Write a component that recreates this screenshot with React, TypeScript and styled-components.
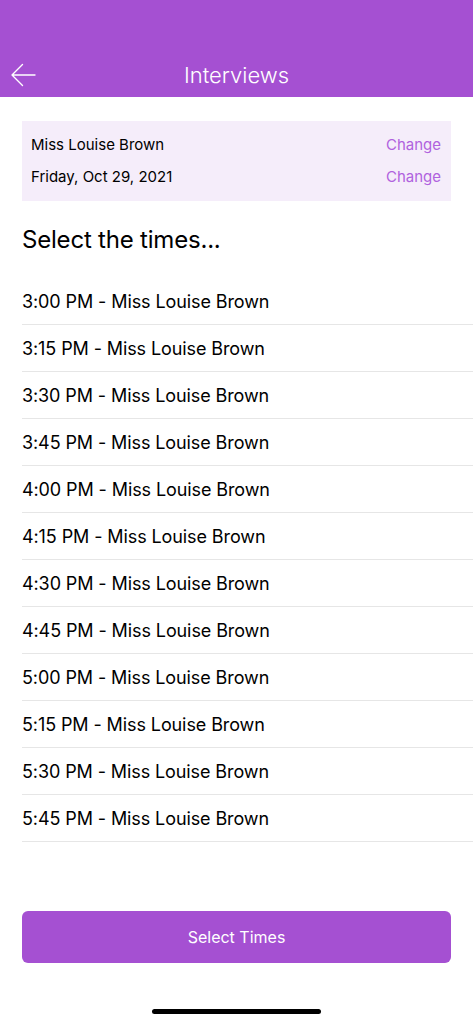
import styled, { createGlobalStyle } from "styled-components";

const GlobalStyle = createGlobalStyle`
  html, body {
    margin: 0;
    padding: 0;
    background: #ffffff;
  }
  body {
    font-family: Inter, "Noto Sans", "Liberation Sans", sans-serif;
    color: #000000;
  }
`;

const PURPLE = "#a550d2";

const Screen = styled.div`
  box-sizing: border-box;
  width: 100%;
  height: 100vh;
  display: flex;
  flex-direction: column;
  overflow: hidden;
`;

const Header = styled.header`
  box-sizing: border-box;
  height: 97px;
  padding-top: 53px;
  background: ${PURPLE};
  display: flex;
  align-items: center;
  position: relative;

  h1 {
    flex: 1;
    margin: 0;
    text-align: center;
    color: #ffffff;
    font-size: 22px;
    font-weight: 300;
    line-height: 44px;
  }
`;

const BackButton = styled.button`
  position: absolute;
  left: 10px;
  bottom: 10px;
  width: 26px;
  height: 24px;
  padding: 0;
  border: none;
  background: none;
  display: flex;
  align-items: center;
  justify-content: center;
`;

const Content = styled.main`
  flex: 1;
  display: flex;
  flex-direction: column;
  padding-left: 22px;
`;

const InfoBox = styled.section`
  box-sizing: border-box;
  margin: 24px 22px 0 0;
  padding: 12px 10px 12px 9px;
  background: #f5edfa;
  display: flex;
  flex-direction: column;
  gap: 8px;
`;

const InfoRow = styled.div`
  display: flex;
  justify-content: space-between;
  align-items: center;
  font-size: 15px;
  line-height: 24px;

  span:last-child {
    color: #b062de;
  }
`;

const Heading = styled.h2`
  margin: 24px 0 23px;
  font-size: 24px;
  font-weight: 400;
  line-height: 30px;
  letter-spacing: -0.2px;
`;

const TimeList = styled.ul`
  list-style: none;
  margin: 0;
  padding: 0;
`;

const TimeRow = styled.li`
  box-sizing: border-box;
  height: 47px;
  padding-top: 12px;
  border-bottom: 1px solid #e6e6e6;
  font-size: 18px;
  line-height: 24px;
  letter-spacing: -0.1px;
`;

const Footer = styled.div`
  margin-top: auto;
  padding: 0 22px 10px 22px;
  display: flex;
  flex-direction: column;
  align-items: center;
`;

const PrimaryButton = styled.button`
  width: 100%;
  height: 52px;
  border: none;
  border-radius: 6px;
  background: ${PURPLE};
  color: #ffffff;
  font-family: inherit;
  font-size: 16px;
  font-weight: 400;
`;

const HomeIndicator = styled.div`
  margin-top: 46px;
  width: 169px;
  height: 5px;
  border-radius: 3px;
  background: #000000;
`;

const times = [
  "3:00 PM",
  "3:15 PM",
  "3:30 PM",
  "3:45 PM",
  "4:00 PM",
  "4:15 PM",
  "4:30 PM",
  "4:45 PM",
  "5:00 PM",
  "5:15 PM",
  "5:30 PM",
  "5:45 PM",
];

const App = (): JSX.Element => {
  return (
    <>
      <GlobalStyle />
      <Screen>
        <Header>
          <BackButton aria-label="Back">
            <svg width="26" height="24" viewBox="0 0 26 24" fill="none">
              <path
                d="M25 12H2M12.5 1.5L2 12l10.5 10.5"
                stroke="#ffffff"
                strokeWidth="1.4"
                strokeLinecap="round"
                strokeLinejoin="round"
              />
            </svg>
          </BackButton>
          <h1>Interviews</h1>
        </Header>
        <Content>
          <InfoBox>
            <InfoRow>
              <span>Miss Louise Brown</span>
              <span>Change</span>
            </InfoRow>
            <InfoRow>
              <span>Friday, Oct 29, 2021</span>
              <span>Change</span>
            </InfoRow>
          </InfoBox>
          <Heading>Select the times...</Heading>
          <TimeList>
            {times.map((time) => (
              <TimeRow key={time}>{time} - Miss Louise Brown</TimeRow>
            ))}
          </TimeList>
        </Content>
        <Footer>
          <PrimaryButton>Select Times</PrimaryButton>
          <HomeIndicator />
        </Footer>
      </Screen>
    </>
  );
};

export default App;
